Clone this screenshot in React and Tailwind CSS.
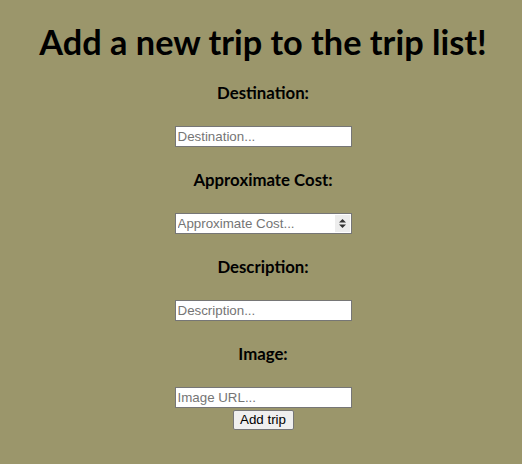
import React from 'react';

const inputCls =
  "block w-[177px] h-[21px] px-[2px] py-[1px] bg-white border border-[#767676] text-[13.33px] text-black placeholder:text-[#757575] font-['Liberation_Sans',Arial,sans-serif] [&::-webkit-inner-spin-button]:appearance-none [&::-webkit-outer-spin-button]:appearance-none";

const Spinner = () => (
  <div className="absolute right-[2px] top-[2px] w-[15px] h-[17px] bg-[#ededed] flex items-center justify-center pointer-events-none">
    <svg width="9" height="11" viewBox="0 0 9 11">
      <path d="M4.5 1 L8 4.5 L1 4.5 Z" fill="#333" />
      <path d="M4.5 10 L8 6.5 L1 6.5 Z" fill="#333" />
    </svg>
  </div>
);

const Field = ({ label, placeholder, type = 'text', first }) => (
  <div className={`flex flex-col items-center ${first ? '' : 'mt-[24px]'}`}>
    <label className="block h-[18px] leading-[18px] text-[16.8px] font-bold text-black">{label}</label>
    <div className="relative mt-[24px] w-[177px]">
      <input type={type} placeholder={placeholder} className={inputCls} />
      {type === 'number' && <Spinner />}
    </div>
  </div>
);

export default function App() {
  return (
    <div className="min-h-[464px] bg-[#9b966b] font-['Lato','Noto_Sans',sans-serif] text-black">
      <div className="flex flex-col items-center pt-[22px] pl-[4px]">
        <h1 className="h-[40px] leading-[40px] text-[34.3px] font-bold mb-[22px]">Add a new trip to the trip list!</h1>
        <form className="flex flex-col items-center" onSubmit={(e) => e.preventDefault()}>
          <Field first label="Destination:" placeholder="Destination..." />
          <Field label="Approximate Cost:" placeholder="Approximate Cost..." type="number" />
          <Field label="Description:" placeholder="Description..." />
          <Field label="Image:" placeholder="Image URL..." />
          <button
            type="submit"
            className="mt-[2px] h-[20px] w-[61px] bg-[#efefef] border border-[#767676] rounded-[2px] text-[13.33px] leading-[16px] font-['Liberation_Sans',Arial,sans-serif]"
          >
            Add trip
          </button>
        </form>
      </div>
    </div>
  );
}
